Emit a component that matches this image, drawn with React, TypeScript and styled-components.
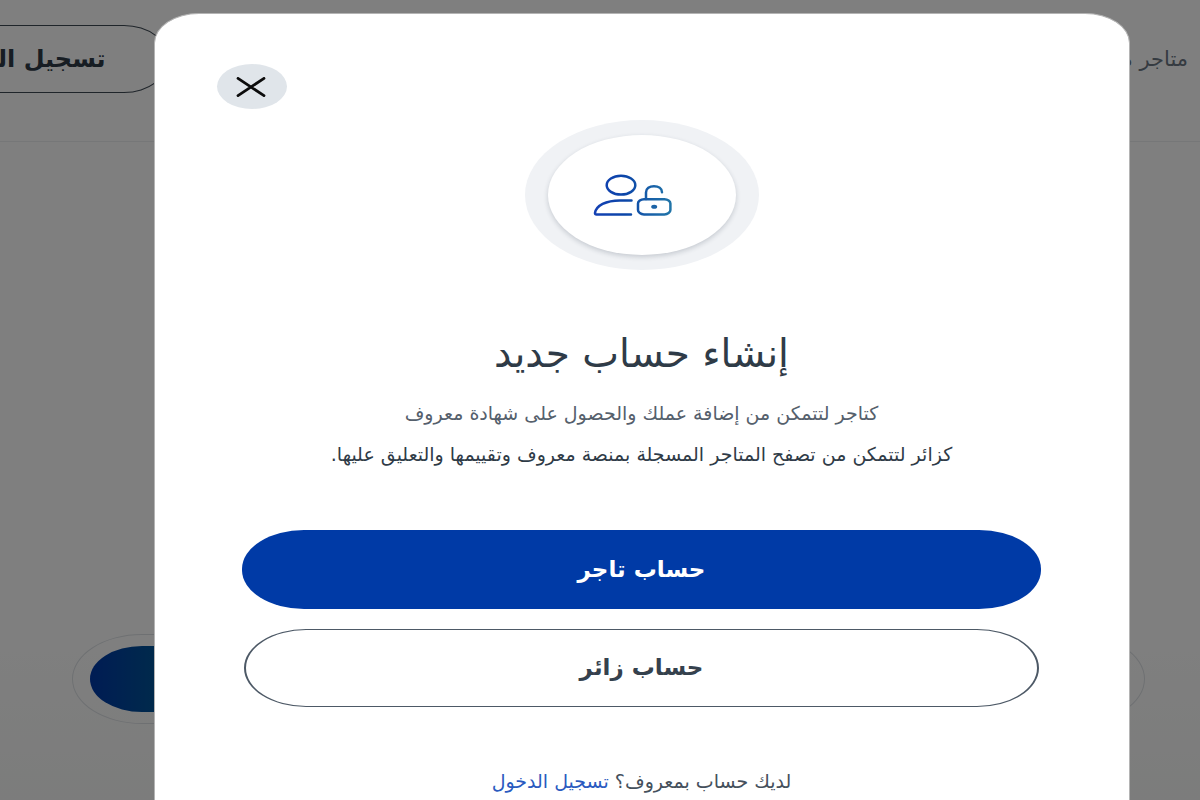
import React from "react";
import styled, { createGlobalStyle, css } from "styled-components";

const GlobalStyle = createGlobalStyle`
  *, *::before, *::after { box-sizing: border-box; }
  html, body { height: 100%; margin: 0; }
  body {
    overflow: hidden;
    background: #fff;
    color: #2f3b47;
    font-family: "DejaVu Sans", sans-serif;
  }
  #root { height: 100%; }
  button, input { font-family: inherit; }
`;

const Page = styled.div`
  height: 100%;
  overflow: hidden;
  background: linear-gradient(#fff 78%, #f8f9f8 100%);
`;

const Header = styled.header`
  display: flex;
  align-items: center;
  justify-content: space-between;
  height: 142px;
  padding: 0 12px 24px 0;
  border-bottom: 1px solid #eceef0;
`;

const NavLink = styled.a`
  color: #6b7683;
  font-size: 21px;
  text-decoration: none;
`;

const HeaderButton = styled.button`
  height: 68px;
  margin-left: -124px;
  padding: 0 62px 0 54px;
  border: 1px solid #3f4a55;
  border-radius: 45px / 34px;
  background: transparent;
  color: #2f3b47;
  font-size: 24px;
  font-weight: 700;
  white-space: nowrap;
`;

const SearchBar = styled.form`
  display: flex;
  align-items: center;
  height: 90px;
  margin: 492px 55px 0 72px;
  padding: 0 60px 0 17px;
  border: 1px solid #dde1e5;
  border-radius: 70px / 45px;
`;

const SearchInput = styled.input`
  flex: 1;
  min-width: 0;
  border: 0;
  outline: 0;
  background: transparent;
  font-size: 19px;
`;

const SearchButton = styled.button`
  width: 180px;
  height: 66px;
  border: 0;
  border-radius: 52px / 33px;
  background: linear-gradient(90deg, #0038a8, #00857c);
`;

const Overlay = styled.div`
  position: fixed;
  inset: 0;
  overflow: hidden;
  padding: 13px 70px 0 154px;
  background: rgba(0, 0, 0, 0.5);
`;

const Dialog = styled.section`
  display: flex;
  flex-direction: column;
  min-height: 100%;
  padding: 50px 88px 80px 87px;
  border: 1px solid #b4b4b4;
  border-radius: 45px 45px 0 0 / 30px 30px 0 0;
  background: #fff;
`;

const CloseButton = styled.button`
  display: grid;
  place-items: center;
  align-self: flex-end;
  width: 70px;
  height: 45px;
  margin-left: -25px;
  padding: 0;
  border: 0;
  border-radius: 50%;
  background: #e0e5ea;
`;

const IconRing = styled.div`
  display: grid;
  place-items: center;
  align-self: center;
  width: 234px;
  height: 150px;
  margin-top: 11px;
  border-radius: 50%;
  background: #f0f2f5;
`;

const IconDisc = styled.div`
  display: grid;
  place-items: center;
  width: 188px;
  height: 120px;
  border-radius: 50%;
  background: #fff;
  box-shadow: 0 2px 5px rgba(30, 45, 65, 0.2);
`;

const Title = styled.h1`
  margin: 60px 0 15px;
  font-size: 39px;
  font-weight: 400;
  line-height: 48px;
  text-align: center;
`;

const Lead = styled.p<{ $strong?: boolean }>`
  margin: 0;
  color: ${(p) => (p.$strong ? "#2f3b47" : "#55606c")};
  font-size: 19px;
  font-weight: 400;
  line-height: 41px;
  text-align: center;
  white-space: nowrap;
`;

const Actions = styled.div`
  display: flex;
  flex-direction: column;
  gap: 20px;
  margin-top: 55px;
`;

const ActionButton = styled.button<{ $primary?: boolean }>`
  height: 79px;
  padding: 0 0 2px;
  border-radius: 62px / 39px;
  font-size: 23px;
  font-weight: 700;
  ${(p) =>
    p.$primary
      ? css`
          border: 0;
          background: #003aa6;
          color: #fff;
        `
      : css`
          height: 78px;
          margin: 0 2px;
          border: solid #4d5966;
          border-width: 1px 2px;
          background: #fff;
          color: #35414d;
        `}
`;

const SignIn = styled.p`
  margin: 54px 0 0;
  color: #45505c;
  font-size: 19px;
  line-height: 41px;
  text-align: center;
`;

const SignInLink = styled.a`
  color: #2a5abf;
  text-decoration: none;
`;

const CloseIcon = () => (
  <svg width="32" height="20" viewBox="0 0 32 20" fill="none" aria-hidden="true">
    <path d="M2 1.4 28 18.6M28 1.4 2 18.6" stroke="#0c0c0c" strokeWidth="2.8" strokeLinecap="round" />
  </svg>
);

const AccountIcon = () => (
  <svg width="98" height="42" viewBox="0 0 98 42" fill="none" aria-hidden="true">
    <defs>
      <linearGradient id="accountStroke" x1="0" y1="0" x2="80" y2="0" gradientUnits="userSpaceOnUse">
        <stop offset="0" stopColor="#1440b4" />
        <stop offset="0.4" stopColor="#0b45a8" />
        <stop offset="1" stopColor="#2277a8" />
      </linearGradient>
    </defs>
    <g stroke="url(#accountStroke)" strokeWidth="2.5" strokeLinecap="round" strokeLinejoin="round">
      <ellipse cx="28" cy="11.2" rx="14.3" ry="9.4" />
      <path d="M38.5 26.4H27C13 26.4 3 31.5 2 39Q1.8 40.4 3.5 40.4H38" />
      <rect x="45" y="25.2" width="32.4" height="15.2" rx="6" ry="4.4" />
      <path d="M53 25V18.5C53 14.5 56.5 12.2 61 12.2C65.5 12.2 69 14.5 69 18.2" />
    </g>
    <ellipse cx="61.2" cy="32.8" rx="3" ry="2" fill="#1c63a6" />
  </svg>
);

export default function App() {
  return (
    <>
      <GlobalStyle />
      <Page dir="rtl" lang="ar">
        <Header>
          <NavLink href="#stores">متاجر معروف</NavLink>
          <HeaderButton type="button">تسجيل الدخول</HeaderButton>
        </Header>
        <SearchBar>
          <SearchInput type="search" aria-label="بحث" />
          <SearchButton type="button" aria-label="بحث" />
        </SearchBar>
      </Page>
      <Overlay dir="rtl" lang="ar">
        <Dialog role="dialog" aria-modal="true" aria-labelledby="dialog-title">
          <CloseButton type="button" aria-label="إغلاق">
            <CloseIcon />
          </CloseButton>
          <IconRing>
            <IconDisc>
              <AccountIcon />
            </IconDisc>
          </IconRing>
          <Title id="dialog-title">إنشاء حساب جديد</Title>
          <Lead>كتاجر لتتمكن من إضافة عملك والحصول على شهادة معروف</Lead>
          <Lead $strong>كزائر لتتمكن من تصفح المتاجر المسجلة بمنصة معروف وتقييمها والتعليق عليها.</Lead>
          <Actions>
            <ActionButton type="button" $primary>
              حساب تاجر
            </ActionButton>
            <ActionButton type="button">حساب زائر</ActionButton>
          </Actions>
          <SignIn>
            لديك حساب بمعروف؟ <SignInLink href="#login">تسجيل الدخول</SignInLink>
          </SignIn>
        </Dialog>
      </Overlay>
    </>
  );
}
